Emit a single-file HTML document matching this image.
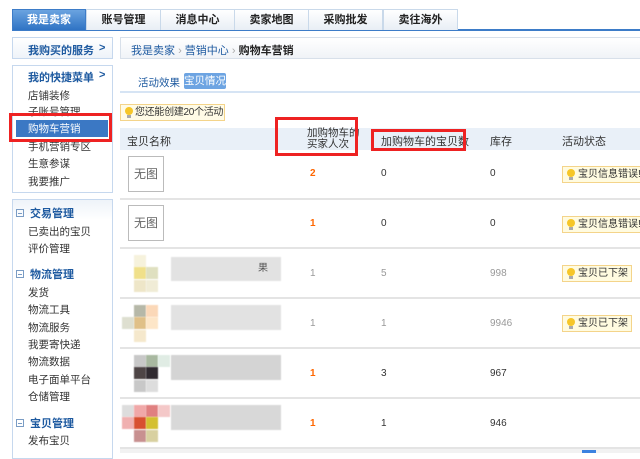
<!DOCTYPE html>
<html><head><meta charset="utf-8"><style>
*{margin:0;padding:0;box-sizing:border-box}
body{width:640px;height:453px;overflow:hidden;background:#fff;font-family:"Liberation Sans","Noto Sans CJK SC",sans-serif;font-size:11px;color:#333;position:relative;white-space:nowrap}
.a{position:absolute}
.tab{position:absolute;top:9px;height:21px;border:1px solid #c9d9ea;border-bottom:none;background:linear-gradient(#fff,#e8eef5);font-weight:bold;font-size:11px;text-align:center;line-height:20px;color:#222}
.box{position:absolute;border:1px solid #c6d8ee;background:#fff}
.hd{font-weight:bold;color:#1e5aa0}
.it{position:absolute;left:28px;font-size:10.5px;color:#333}
.sec{position:absolute;left:16px;font-weight:bold;color:#1e5aa0;font-size:11px}
.sec i{display:inline-block;width:8px;height:8px;border:1px solid #7a9cc4;margin-right:6px;vertical-align:0;position:relative}
.sec i:after{content:"";position:absolute;left:1px;top:3px;width:4px;height:1px;background:#7a9cc4}
.row{position:absolute;left:120px;width:520px;border-bottom:2px solid #e4e4e4}
.nopic{position:absolute;left:128px;width:36px;height:36px;border:1px solid #bbb;color:#666;font-size:12px;text-align:center;line-height:34px}
.v{position:absolute;font-size:10px}
.badge{position:absolute;left:562px;height:17px;border:1px solid #f4d48a;background:#fffbe0;font-size:10px;line-height:15px;padding-left:15px;color:#333;width:80px;overflow:hidden}
.badge:before,.tip:before{content:"";position:absolute;left:4px;top:2px;width:8px;height:8px;border-radius:50%;background:#f6c628}
.badge:after,.tip:after{content:"";position:absolute;left:6px;top:10px;width:4px;height:3px;background:#aaa}
.b{position:absolute;width:12px;height:12px;filter:blur(0.6px)}
.red{position:absolute;border:3px solid #ee2222}
</style></head><body>
<div class="a" style="left:12px;top:29px;width:628px;height:2px;background:#3d7cc8"></div>
<div class="tab" style="left:12px;width:74px;background:linear-gradient(#6aa3e0,#2f73c4);color:#fff;border-color:#3d7cc8">我是卖家</div>
<div class="tab" style="left:86px;width:75px">账号管理</div>
<div class="tab" style="left:160px;width:75px">消息中心</div>
<div class="tab" style="left:234px;width:75px">卖家地图</div>
<div class="tab" style="left:308px;width:75px">采购批发</div>
<div class="tab" style="left:383px;width:75px">卖往海外</div>

<div class="box" style="left:12px;top:37px;width:101px;height:22px;background:linear-gradient(#fff,#eef3f9)"><span class="hd a" style="left:15px;top:4px">我购买的服务</span><span class="hd a" style="left:86px;top:4px">&gt;</span></div>
<div class="box" style="left:12px;top:65px;width:101px;height:128px"><span class="hd a" style="left:15px;top:3px">我的快捷菜单</span><span class="hd a" style="left:86px;top:3px">&gt;</span></div>
<div class="it" style="top:88px">店铺装修</div>
<div class="it" style="top:104px">子账号管理</div>
<div class="a" style="left:16px;top:120px;width:92px;height:17px;background:#3b78c4"></div>
<div class="it" style="top:121px;color:#fff">购物车营销</div>
<div class="it" style="top:139px">手机营销专区</div>
<div class="it" style="top:156px">生意参谋</div>
<div class="it" style="top:174px">我要推广</div>
<div class="red" style="left:9px;top:113px;width:103px;height:29px"></div>

<div class="box" style="left:12px;top:199px;width:101px;height:260px;background:linear-gradient(#eef3f9,#fff 20px)"></div>
<div class="sec" style="top:205px"><i></i>交易管理</div>
<div class="it" style="top:224px">已卖出的宝贝</div>
<div class="it" style="top:241px">评价管理</div>
<div class="sec" style="top:266px"><i></i>物流管理</div>
<div class="it" style="top:285px">发货</div>
<div class="it" style="top:302px">物流工具</div>
<div class="it" style="top:320px">物流服务</div>
<div class="it" style="top:337px">我要寄快递</div>
<div class="it" style="top:354px">物流数据</div>
<div class="it" style="top:372px">电子面单平台</div>
<div class="it" style="top:389px">仓储管理</div>
<div class="sec" style="top:415px"><i></i>宝贝管理</div>
<div class="it" style="top:433px">发布宝贝</div>

<div class="box" style="left:120px;top:37px;width:530px;height:22px;background:linear-gradient(#fff,#f0f3f7);border-color:#d8e0ea"><span class="a" style="left:10px;top:4px;color:#1e5aa0">我是卖家 <span style="color:#aaa">›</span> 营销中心 <span style="color:#aaa">›</span> <b style="color:#222">购物车营销</b></span></div>
<div class="a" style="left:120px;top:91px;width:520px;height:2px;background:#d6e4f4"></div>
<div class="a" style="left:138px;top:75px;color:#1e5aa0;font-size:10.5px">活动效果</div>
<div class="a" style="left:184px;top:73px;width:42px;height:16px;background:#6da4e2;border-radius:2px;color:#fff;font-size:10.5px;text-align:center;line-height:16px">宝贝情况</div>
<div class="a tip" style="left:120px;top:104px;width:105px;height:17px;border:1px solid #f4d48a;background:#fffbe6;padding-left:14px;line-height:15px;font-size:10px;overflow:hidden;letter-spacing:-0.3px">您还能创建20个活动</div>

<div class="a" style="left:120px;top:128px;width:520px;height:22px;background:#e9f0f8"></div>
<div class="a" style="left:127px;top:133px">宝贝名称</div>
<div class="a" style="left:307px;top:128px;line-height:11px;font-size:10.5px">加购物车的<br>买家人次</div>
<div class="a" style="left:381px;top:133px">加购物车的宝贝数</div>
<div class="a" style="left:490px;top:133px">库存</div>
<div class="a" style="left:562px;top:133px">活动状态</div>
<div class="red" style="left:275px;top:117px;width:83px;height:39px"></div>
<div class="red" style="left:371px;top:129px;width:95px;height:22px"></div>

<div class="row" style="top:150px;height:50px"></div>
<div class="row" style="top:200px;height:49px"></div>
<div class="row" style="top:249px;height:50px"></div>
<div class="row" style="top:299px;height:50px"></div>
<div class="row" style="top:349px;height:50px"></div>
<div class="row" style="top:399px;height:50px"></div>
<div class="a" style="left:120px;top:449px;width:520px;height:4px;background:#f2f2f2"></div>

<div class="nopic" style="top:156px">无图</div>
<div class="nopic" style="top:205px">无图</div>

<div class="v" style="left:310px;top:168px;color:#f60;font-weight:bold">2</div>
<div class="v" style="left:381px;top:168px">0</div><div class="v" style="left:490px;top:168px">0</div>
<div class="badge" style="top:166px">宝贝信息错误!</div>
<div class="v" style="left:310px;top:218px;color:#f60;font-weight:bold">1</div>
<div class="v" style="left:381px;top:218px">0</div><div class="v" style="left:490px;top:218px">0</div>
<div class="badge" style="top:216px">宝贝信息错误!</div>
<div class="v" style="left:310px;top:268px;color:#999">1</div>
<div class="v" style="left:381px;top:268px;color:#999">5</div><div class="v" style="left:490px;top:268px;color:#999">998</div>
<div class="badge" style="top:265px;width:70px">宝贝已下架</div>
<div class="v" style="left:310px;top:318px;color:#999">1</div>
<div class="v" style="left:381px;top:318px;color:#999">1</div><div class="v" style="left:490px;top:318px;color:#999">9946</div>
<div class="badge" style="top:315px;width:70px">宝贝已下架</div>
<div class="v" style="left:310px;top:368px;color:#f60;font-weight:bold">1</div>
<div class="v" style="left:381px;top:368px">3</div><div class="v" style="left:490px;top:368px">967</div>
<div class="v" style="left:310px;top:418px;color:#f60;font-weight:bold">1</div>
<div class="v" style="left:381px;top:418px">1</div><div class="v" style="left:490px;top:418px">946</div>

<div class="b" style="left:171px;top:257px;width:110px;height:24px;background:#e2e2e2"></div>
<div class="b" style="left:134px;top:255px;background:#f6f2dc"></div><div class="b" style="left:134px;top:267px;background:#f0e08a"></div><div class="b" style="left:134px;top:280px;background:#eee6c8"></div>
<div class="b" style="left:146px;top:267px;background:#dfe0c0"></div><div class="b" style="left:146px;top:280px;background:#f0ecd6"></div>
<div class="b" style="left:171px;top:305px;width:110px;height:25px;background:#e2e2e2"></div>
<div class="b" style="left:134px;top:305px;background:#b6b8a8"></div><div class="b" style="left:134px;top:317px;background:#e0c088"></div><div class="b" style="left:134px;top:330px;background:#f5e8cc"></div>
<div class="b" style="left:146px;top:305px;background:#fbd8b8"></div><div class="b" style="left:146px;top:317px;background:#fde6c8"></div><div class="b" style="left:122px;top:317px;background:#dedfd0"></div>
<div class="b" style="left:171px;top:355px;width:110px;height:25px;background:#d4d4d4"></div>
<div class="b" style="left:134px;top:355px;background:#c8c8c8"></div><div class="b" style="left:134px;top:367px;background:#4e4546"></div><div class="b" style="left:134px;top:380px;background:#c8c8c8"></div>
<div class="b" style="left:146px;top:355px;background:#a8b8a0"></div><div class="b" style="left:146px;top:367px;background:#302a30"></div><div class="b" style="left:146px;top:380px;background:#ddd"></div><div class="b" style="left:158px;top:355px;background:#e0ece4"></div>
<div class="b" style="left:171px;top:405px;width:110px;height:25px;background:#d8d8d8"></div>
<div class="b" style="left:122px;top:405px;background:#ddd"></div><div class="b" style="left:122px;top:417px;background:#f0b0b0"></div>
<div class="b" style="left:134px;top:405px;background:#f0a8a8"></div><div class="b" style="left:134px;top:417px;background:#d85030"></div><div class="b" style="left:134px;top:430px;background:#c89090"></div>
<div class="b" style="left:146px;top:405px;background:#e08080"></div><div class="b" style="left:146px;top:417px;background:#d4c030"></div><div class="b" style="left:146px;top:430px;background:#d8d0a0"></div><div class="b" style="left:158px;top:405px;background:#f4c8c8"></div>
<div class="a" style="left:258px;top:259px;font-size:10px;color:#555">果</div>
<div class="a" style="left:582px;top:450px;width:14px;height:3px;background:#3b82e0"></div>
</body></html>
